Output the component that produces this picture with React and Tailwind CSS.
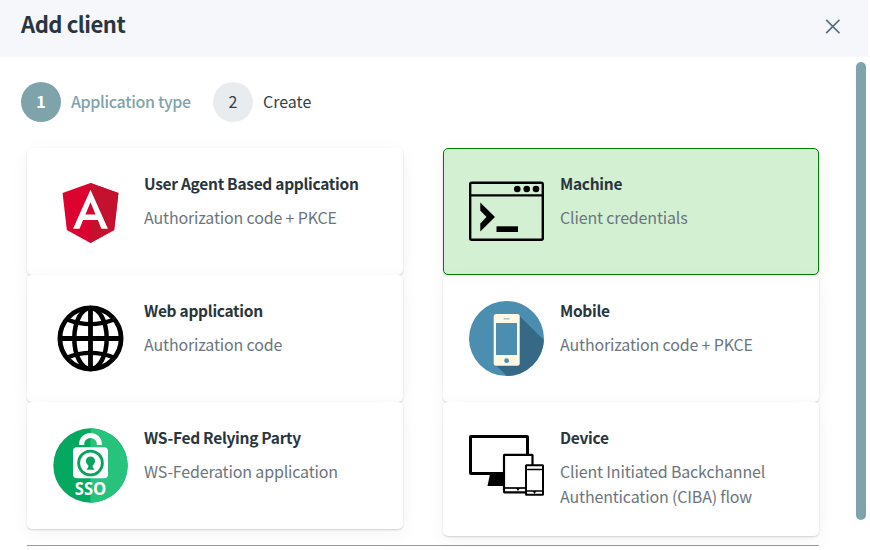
import React from "react";

function AngularIcon() {
  return (
    <svg width="75" height="75" viewBox="0 0 250 250">
      <path fill="#dd0331" d="M125 30 31.9 63.2 46.1 186.3 125 230l78.9-43.7 14.2-123.1z" />
      <path fill="#c3112e" d="M125 30v22.2-.1V230l78.9-43.7 14.2-123.1z" />
      <path fill="#fff" d="M125 52.1 66.8 182.6h21.7l11.7-29.2h49.4l11.7 29.2H183zm17 83.3h-34l17-40.9z" />
    </svg>
  );
}

function TerminalIcon() {
  return (
    <svg width="75" height="75" viewBox="0 0 75 75">
      <g fill="none" stroke="#000" strokeWidth="2.4">
        <rect x="1.2" y="8.7" width="72.6" height="57" rx="1.5" />
        <path d="M1 21.4h73" />
      </g>
      <circle cx="48.3" cy="15" r="3.3" />
      <circle cx="57.7" cy="15" r="3.3" />
      <circle cx="67" cy="15" r="3.3" />
      <path d="M11.3 28.5 26 43 11.3 57.5v-8L17.5 43l-6.2-6.5z" />
      <path d="M27.5 52.3H49V58H27.5z" />
    </svg>
  );
}

function GlobeIcon() {
  return (
    <svg width="75" height="75" viewBox="0 0 75 75" fill="none" stroke="#000" strokeWidth="4.8">
      <circle cx="37.5" cy="37.5" r="30.6" />
      <ellipse cx="37.5" cy="37.5" rx="16.2" ry="30.6" strokeWidth="4.5" />
      <path d="M37.5 6v63M6 37.5h63" />
      <path d="M14 18.5Q37.5 27.7 61 18.5M14 56.5Q37.5 47.3 61 56.5" strokeWidth="4.3" />
    </svg>
  );
}

function PhoneIcon() {
  return (
    <svg width="75" height="75" viewBox="0 0 75 75">
      <circle cx="37.5" cy="37.5" r="37.5" fill="#4b8eb0" />
      <path fill="#366985" d="M50 14.5 74.9 39A37.5 37.5 0 0 1 38 75L26 63.5z" />
      <rect x="24.7" y="13" width="26" height="51.7" rx="2.5" fill="#fff8e2" />
      <path fill="#4b8eb0" d="M27 22h21v32H27z" />
      <path stroke="#8fb7c5" strokeWidth="1.2" d="M34.7 17.8h5.8" />
      <circle cx="37.6" cy="59.7" r="2.4" fill="#4b8eb0" />
    </svg>
  );
}

function SsoIcon() {
  return (
    <svg width="75" height="75" viewBox="0 0 75 75">
      <circle cx="37.5" cy="37.5" r="37.2" fill="#04a95f" />
      <path fill="#27c37d" d="M37.5.3a37.2 37.2 0 0 1 0 74.4z" />
      <path d="M28.7 17v-1.3a8.8 8.3 0 0 1 17.6 0V17" fill="none" stroke="#fff" strokeWidth="5" />
      <rect x="20" y="19.3" width="35" height="31" rx="4" fill="#fff" />
      <circle cx="37.5" cy="35" r="11.9" fill="none" stroke="#07a45d" strokeWidth="2.8" />
      <circle cx="37.5" cy="33" r="4.6" fill="#07a45d" />
      <path fill="#07a45d" d="M35.3 34.5h4.4v4.5l1.8 2.8h-8l1.8-2.8z" />
      <text x="37.5" y="67.1" textAnchor="middle" fill="#fff" textLength="31.5" lengthAdjust="spacingAndGlyphs" className="font-['Open_Sans',sans-serif] text-[18.5px] font-bold">SSO</text>
    </svg>
  );
}

function DevicesIcon() {
  return (
    <svg width="75" height="75" viewBox="0 0 75 75">
      <rect x="1.5" y="8.5" width="57" height="37" rx=".5" fill="#fff" stroke="#000" strokeWidth="3" />
      <path d="M21 46h14v12H18.5z" />
      <rect x="35" y="26.8" width="28.5" height="37.5" rx=".5" fill="#fff" stroke="#000" strokeWidth="2.2" />
      <path stroke="#000" strokeWidth="1.7" d="M35 60h28" />
      <path d="M47 60h4l-2 3z" />
      <rect x="57" y="37.3" width="17" height="29.5" rx=".5" fill="#fff" stroke="#000" strokeWidth="2" />
      <path stroke="#000" strokeWidth="1.6" d="M57 41.5h17M57 63h17" />
      <path d="M63.5 63h4l-2 3z" />
    </svg>
  );
}

const card = "flex rounded-[5px] border bg-clip-border pl-[25px] pt-[25px] pb-[25px] shadow-[0_1px_2px_rgba(0,0,0,0.16),0_4px_18px_rgba(0,0,0,0.05)]";

function Card({ icon, title, text, selected, tall }) {
  return (
    <div className={`${card} ${tall ? "h-[134px]" : "h-[127px]"} ${selected ? "border-[#008000] bg-[#d3f0d3]" : "border-transparent bg-white"}`}>
      <div className="h-[75px] w-[75px] shrink-0">{icon}</div>
      <div className="ml-4 w-[240px]">
        <h2 className="mt-[-3px] text-[15.5px] leading-[25px] font-bold tracking-[-0.29px] text-[#29363d]">{title}</h2>
        <p className="mt-[9px] text-[16px] leading-[25px] tracking-[-0.16px] text-[#6c757d]">{text}</p>
      </div>
    </div>
  );
}

export default function App() {
  return (
    <div className="h-[550px] w-[870px] overflow-hidden bg-white font-['Noto_Sans_CJK_SC',sans-serif]">
      <header className="flex h-[57px] w-[868px] items-start justify-between bg-[#f5f7fb] pl-[21px] pr-7">
        <h1 className="mt-[6px] text-[22px] leading-[34px] font-bold tracking-[-0.45px] text-[#29363d]">Add client</h1>
        <svg className="mt-[19px]" width="15" height="15" viewBox="0 0 15 15" fill="none" stroke="#5b7083" strokeWidth="1.8">
          <path d="m1.2.8 13.3 13.4M14.5.8 1.2 14.2" />
        </svg>
      </header>
      <div className="flex justify-between pr-1">
        <main className="w-[819px]">
          <nav className="mt-[25px] ml-[21px] flex items-center text-[16px] leading-[25px]">
            <span className="flex h-10 w-10 items-center justify-center rounded-full bg-[#7fa3ab] pb-[2px] font-bold text-white">1</span>
            <span className="ml-[10px] w-[142px] pb-[2px] font-medium tracking-[-0.33px] text-[#7fa3ab]">Application type</span>
            <span className="flex h-10 w-10 items-center justify-center rounded-full bg-[#e9ecef] pb-[2px] text-[#343f46]">2</span>
            <span className="ml-[10px] pb-[2px] text-[#343f46]">Create</span>
          </nav>
          <section className="mt-[26px] ml-[27px] grid h-[398px] grid-cols-2 items-start gap-x-[40px] border-b border-[#999]">
            <div className="flex flex-col">
              <Card icon={<AngularIcon />} title="User Agent Based application" text="Authorization code + PKCE" />
              <Card icon={<GlobeIcon />} title="Web application" text="Authorization code" />
              <Card icon={<SsoIcon />} title="WS-Fed Relying Party" text="WS-Federation application" />
            </div>
            <div className="flex flex-col">
              <Card icon={<TerminalIcon />} title="Machine" text="Client credentials" selected />
              <Card icon={<PhoneIcon />} title="Mobile" text="Authorization code + PKCE" />
              <Card icon={<DevicesIcon />} title="Device" text="Client Initiated Backchannel Authentication (CIBA) flow" tall />
            </div>
          </section>
        </main>
        <div className="mt-[5px] h-[458px] w-[10px] rounded-full bg-[#7fa3ab]" />
      </div>
    </div>
  );
}
